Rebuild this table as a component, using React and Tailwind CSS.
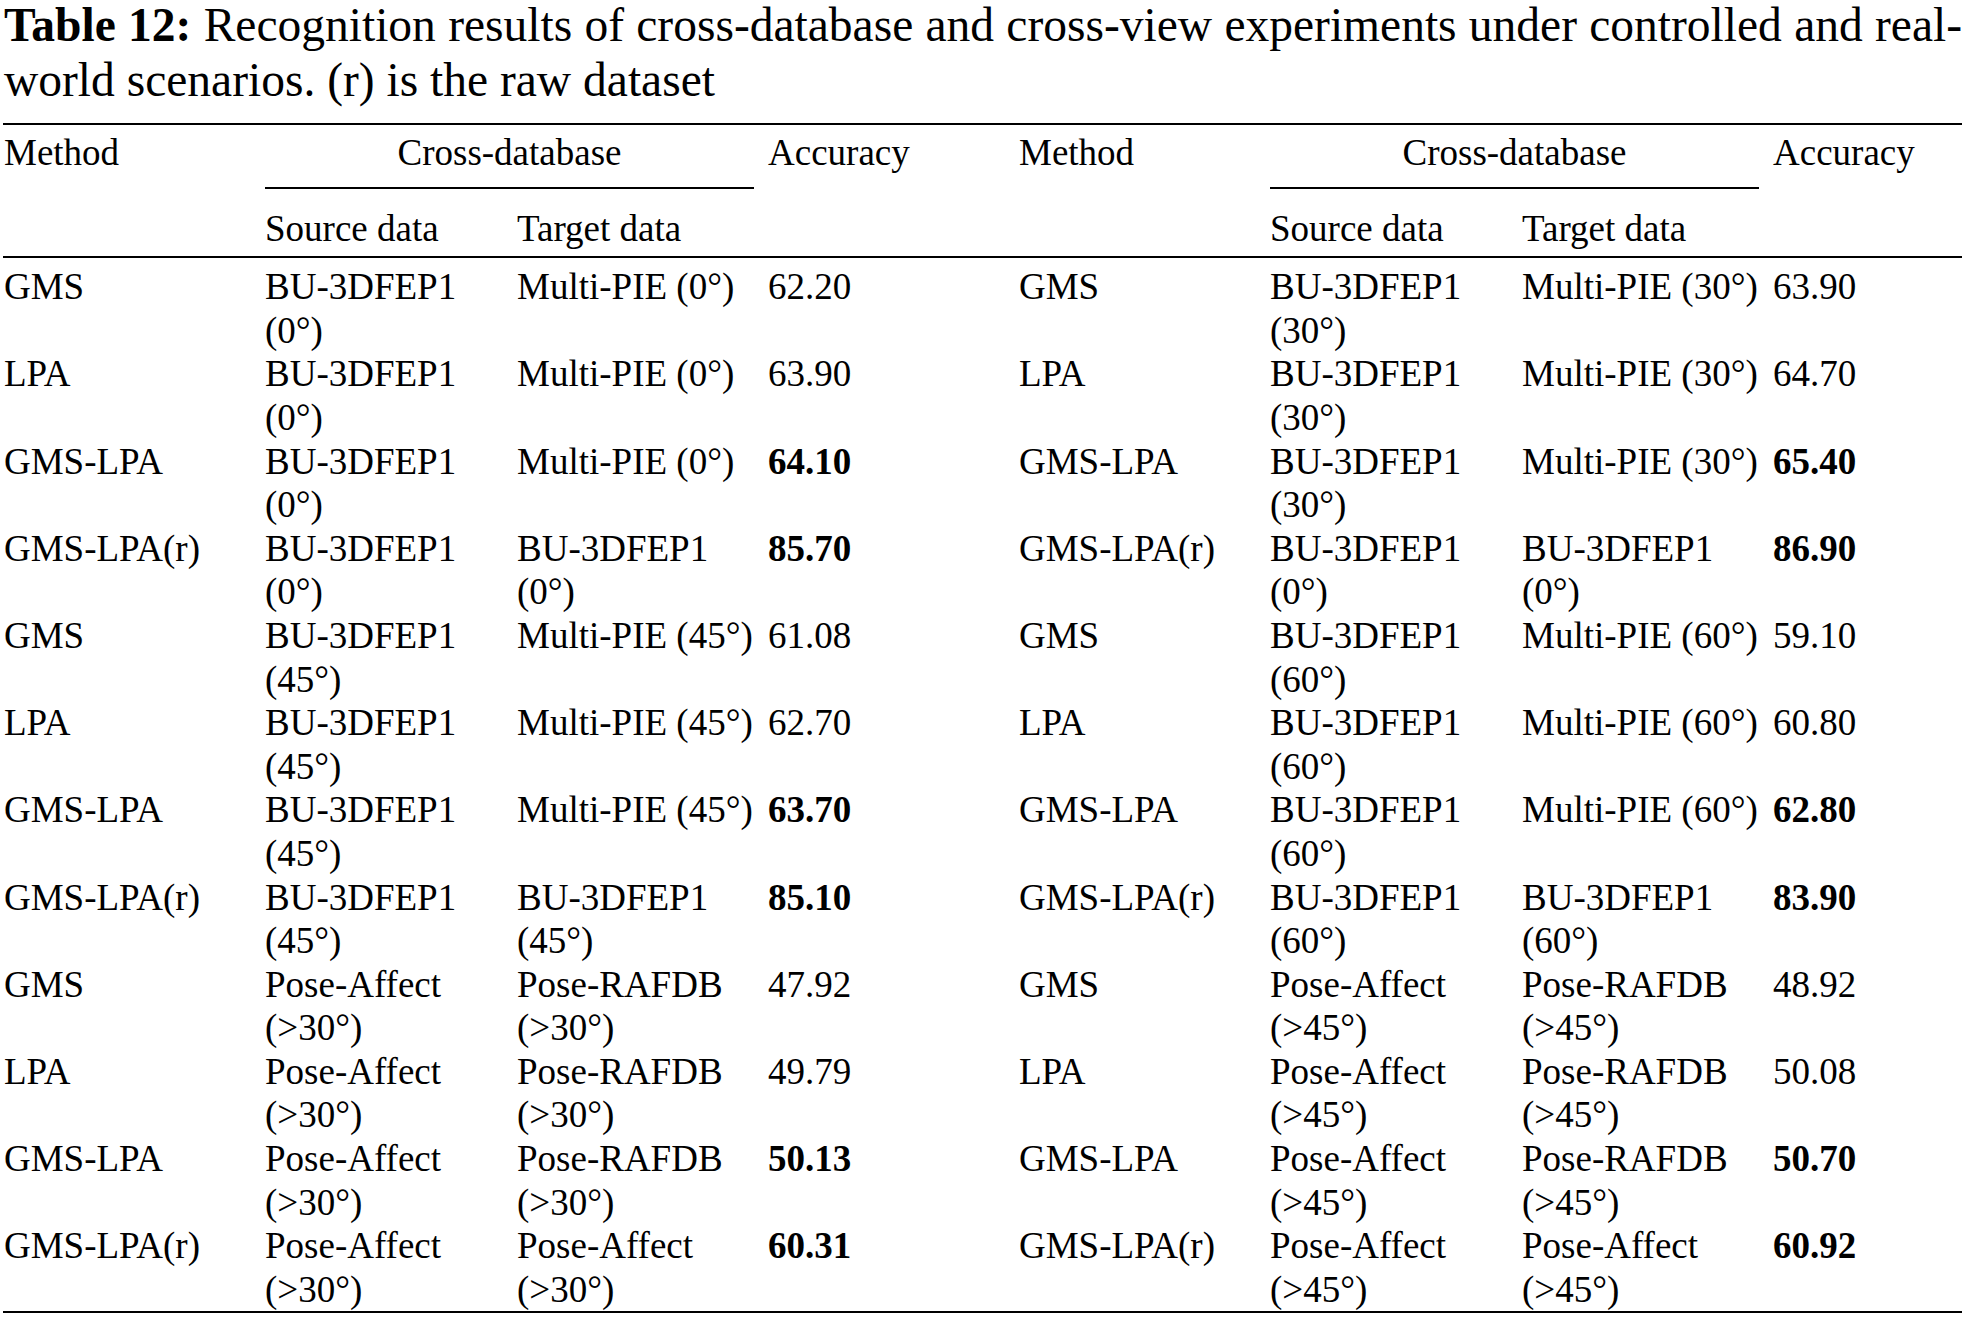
const left = [
  ['GMS', ['BU-3DFEP1', '(0°)'], ['Multi-PIE (0°)'], '62.20', false],
  ['LPA', ['BU-3DFEP1', '(0°)'], ['Multi-PIE (0°)'], '63.90', false],
  ['GMS-LPA', ['BU-3DFEP1', '(0°)'], ['Multi-PIE (0°)'], '64.10', true],
  ['GMS-LPA(r)', ['BU-3DFEP1', '(0°)'], ['BU-3DFEP1', '(0°)'], '85.70', true],
  ['GMS', ['BU-3DFEP1', '(45°)'], ['Multi-PIE (45°)'], '61.08', false],
  ['LPA', ['BU-3DFEP1', '(45°)'], ['Multi-PIE (45°)'], '62.70', false],
  ['GMS-LPA', ['BU-3DFEP1', '(45°)'], ['Multi-PIE (45°)'], '63.70', true],
  ['GMS-LPA(r)', ['BU-3DFEP1', '(45°)'], ['BU-3DFEP1', '(45°)'], '85.10', true],
  ['GMS', ['Pose-Affect', '(>30°)'], ['Pose-RAFDB', '(>30°)'], '47.92', false],
  ['LPA', ['Pose-Affect', '(>30°)'], ['Pose-RAFDB', '(>30°)'], '49.79', false],
  ['GMS-LPA', ['Pose-Affect', '(>30°)'], ['Pose-RAFDB', '(>30°)'], '50.13', true],
  ['GMS-LPA(r)', ['Pose-Affect', '(>30°)'], ['Pose-Affect', '(>30°)'], '60.31', true],
];

const right = [
  ['GMS', ['BU-3DFEP1', '(30°)'], ['Multi-PIE (30°)'], '63.90', false],
  ['LPA', ['BU-3DFEP1', '(30°)'], ['Multi-PIE (30°)'], '64.70', false],
  ['GMS-LPA', ['BU-3DFEP1', '(30°)'], ['Multi-PIE (30°)'], '65.40', true],
  ['GMS-LPA(r)', ['BU-3DFEP1', '(0°)'], ['BU-3DFEP1', '(0°)'], '86.90', true],
  ['GMS', ['BU-3DFEP1', '(60°)'], ['Multi-PIE (60°)'], '59.10', false],
  ['LPA', ['BU-3DFEP1', '(60°)'], ['Multi-PIE (60°)'], '60.80', false],
  ['GMS-LPA', ['BU-3DFEP1', '(60°)'], ['Multi-PIE (60°)'], '62.80', true],
  ['GMS-LPA(r)', ['BU-3DFEP1', '(60°)'], ['BU-3DFEP1', '(60°)'], '83.90', true],
  ['GMS', ['Pose-Affect', '(>45°)'], ['Pose-RAFDB', '(>45°)'], '48.92', false],
  ['LPA', ['Pose-Affect', '(>45°)'], ['Pose-RAFDB', '(>45°)'], '50.08', false],
  ['GMS-LPA', ['Pose-Affect', '(>45°)'], ['Pose-RAFDB', '(>45°)'], '50.70', true],
  ['GMS-LPA(r)', ['Pose-Affect', '(>45°)'], ['Pose-Affect', '(>45°)'], '60.92', true],
];

const cols = 'grid grid-cols-[261px_252px_251px_251px_251px_252px_251px_1fr] pl-[1px]';

function Lines({ lines }) {
  return (
    <div className="whitespace-nowrap">
      {lines.map((l, i) => (
        <div key={i}>{l}</div>
      ))}
    </div>
  );
}

function Half({ row }) {
  const [method, source, target, acc, bold] = row;
  return (
    <>
      <div className="whitespace-nowrap">{method}</div>
      <Lines lines={source} />
      <Lines lines={target} />
      <div className={bold ? 'font-bold' : ''}>{acc}</div>
    </>
  );
}

export default function App() {
  return (
    <div
      className="bg-white text-black min-h-screen w-[1967px] overflow-hidden"
      style={{ fontFamily: "'Liberation Serif', 'Times New Roman', serif" }}
    >
      <div className="w-[1959px] ml-[3px]">
        {/* caption */}
        <div className="text-[47.5px] leading-[55px] -mt-[2px] pl-[1px]">
          <div className="whitespace-nowrap text-justify [text-align-last:justify]">
            <span className="font-bold">Table 12:</span> Recognition results of cross-database and cross-view experiments under controlled and real-
          </div>
          <div className="whitespace-nowrap">world scenarios. (r) is the raw dataset</div>
        </div>

        {/* table */}
        <div className="mt-[15px] border-t-2 border-b-2 border-black text-[37px] leading-[43.6px]">
          <div className="pt-[6px] pb-[6px] border-b-2 border-black">
            <div className={cols}>
              <div>Method</div>
              <div className="col-span-2 mr-[14px] pb-[12px] border-b-2 border-black text-center">Cross-database</div>
              <div>Accuracy</div>
              <div>Method</div>
              <div className="col-span-2 mr-[14px] pb-[12px] border-b-2 border-black text-center">Cross-database</div>
              <div>Accuracy</div>

              <div />
              <div className="pt-[18px]">Source data</div>
              <div className="pt-[18px]">Target data</div>
              <div />
              <div />
              <div className="pt-[18px]">Source data</div>
              <div className="pt-[18px]">Target data</div>
              <div />
            </div>
          </div>

          <div className="pt-[7px]">
            {left.map((row, i) => (
              <div key={i} className={`${cols} h-[87.2px]`}>
                <Half row={row} />
                <Half row={right[i]} />
              </div>
            ))}
          </div>
        </div>
      </div>
    </div>
  );
}
